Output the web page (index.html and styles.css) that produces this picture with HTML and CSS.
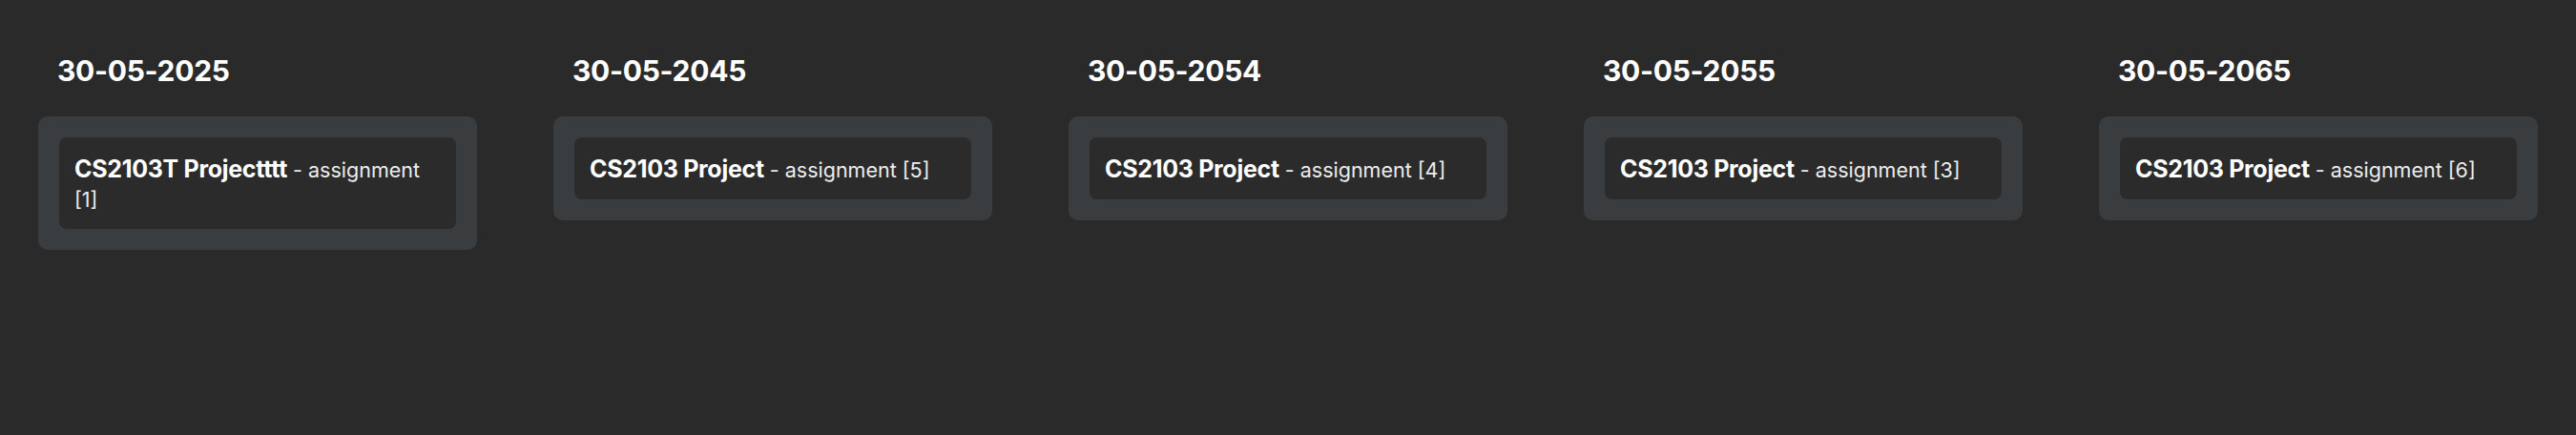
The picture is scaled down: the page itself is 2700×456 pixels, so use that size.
FILE: index.html
```html
<!DOCTYPE html>
<html lang="en">
<head>
<meta charset="utf-8">
<title>Deadlines</title>
<link rel="stylesheet" href="styles.css">
</head>
<body>
<main class="board">
  <section class="column">
    <h2 class="date">30-05-2025</h2>
    <div class="lane">
      <div class="task"><strong class="task-title">CS2103T Projectttt</strong> - assignment [1]</div>
    </div>
  </section>
  <section class="column">
    <h2 class="date">30-05-2045</h2>
    <div class="lane">
      <div class="task"><strong class="task-title">CS2103 Project</strong> - assignment [5]</div>
    </div>
  </section>
  <section class="column">
    <h2 class="date">30-05-2054</h2>
    <div class="lane">
      <div class="task"><strong class="task-title">CS2103 Project</strong> - assignment [4]</div>
    </div>
  </section>
  <section class="column">
    <h2 class="date">30-05-2055</h2>
    <div class="lane">
      <div class="task"><strong class="task-title">CS2103 Project</strong> - assignment [3]</div>
    </div>
  </section>
  <section class="column">
    <h2 class="date">30-05-2065</h2>
    <div class="lane">
      <div class="task"><strong class="task-title">CS2103 Project</strong> - assignment [6]</div>
    </div>
  </section>
</main>
</body>
</html>
```

FILE: styles.css
```css
html, body {
  margin: 0;
  padding: 0;
  background: #2a2a2a;
  height: 100%;
}

body {
  font-family: Inter, "Noto Sans", "Liberation Sans", sans-serif;
  color: #ffffff;
}

.board {
  display: grid;
  grid-template-columns: repeat(5, 1fr);
  column-gap: 80px;
  padding: 56px 40px 0;
  align-items: start;
}

.column {
  display: flex;
  flex-direction: column;
  min-width: 0;
}

.date {
  margin: 0 0 30px;
  padding-left: 20px;
  font-size: 30px;
  font-weight: 700;
  line-height: 36px;
  letter-spacing: -0.3px;
  color: #ffffff;
}

.lane {
  background: #3a3d40;
  border-radius: 10px;
  padding: 22px;
}

.task {
  background: #2b2b2b;
  border-radius: 8px;
  padding: 18px 16px 15px;
  font-size: 21.5px;
  line-height: 31px;
  color: #ededed;
}

.task-title {
  font-size: 25px;
  font-weight: 700;
  letter-spacing: -0.3px;
  color: #ffffff;
}
```
